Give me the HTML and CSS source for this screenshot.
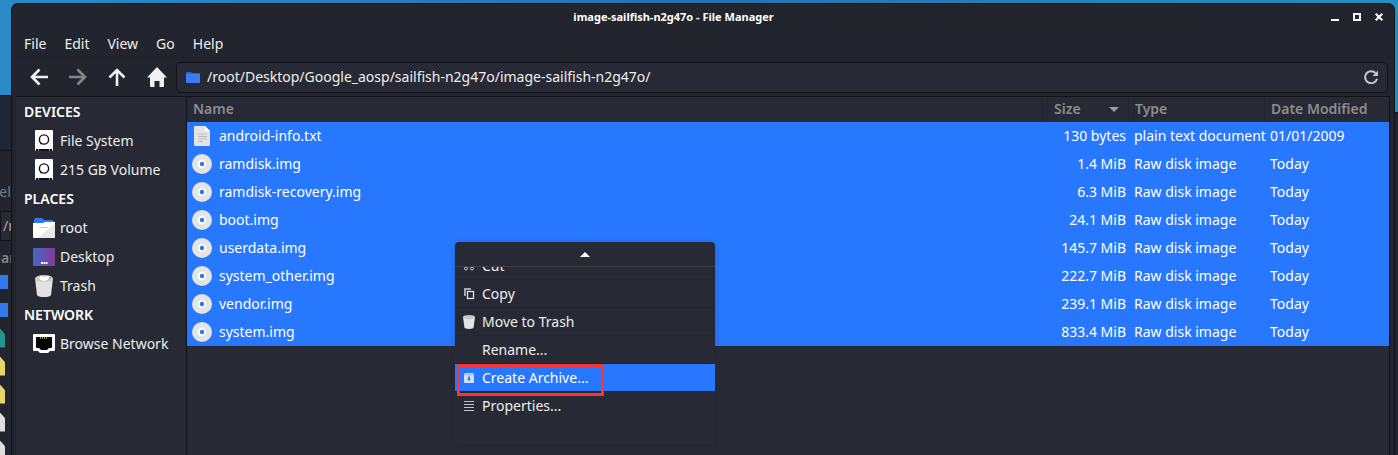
FILE: index.html
```
<!DOCTYPE html>
<html lang="en">
<head>
<meta charset="utf-8">
<title>image-sailfish-n2g47o - File Manager</title>
<link rel="stylesheet" href="styles.css">
</head>
<body>
<svg class="defs" width="0" height="0" aria-hidden="true">
  <symbol id="disc" viewBox="0 0 20 20"><circle cx="10" cy="10" r="10" fill="#e4e4e4"/><circle cx="10" cy="10" r="4.2" fill="#fff"/><circle cx="10" cy="10" r="2.2" fill="#2777ff"/></symbol>
  <symbol id="drive" viewBox="0 0 18 22"><rect width="18" height="21" rx="1" fill="#fff"/><path d="M1 19h16v2H1z" fill="#111"/><path d="M3 19h1v2H3zM14 19h1v2h-1z" fill="#888"/><circle cx="9" cy="9.500" r="4.600" fill="none" stroke="#111" stroke-width="1.400"/><path d="M5 14l2-1" stroke="#111"/></symbol>
  <symbol id="page" viewBox="0 0 16 20"><path d="M1 0h10l5 5v14q0 1-1 1H1q-1 0-1-1V1q0-1 1-1z" fill="#e4e4e4"/><path d="M11 0l5 5h-4q-1 0-1-1z" fill="#fff"/><path d="M4 8h9M4 10.500h9M4 13h9M4 15.500h5" stroke="#bbb"/></symbol>
  <symbol id="folder" viewBox="0 0 14 11"><path d="M0 1q0-1 1-1h4l1 1h7q1 0 1 1v8q0 1-1 1H1q-1 0-1-1z" fill="#2b65cf"/><path d="M0 2h14v8q0 1-1 1H1q-1 0-1-1z" fill="#3a7df5"/></symbol>
</svg>

<div class="back-window" aria-hidden="true">
  <div class="back-title"></div>
  <div class="back-menu">Help</div>
  <div class="back-path">/r</div>
  <div class="back-head">Name</div>
  <div class="back-row folder"></div>
  <div class="back-row folder"></div>
  <div class="back-row teal"></div>
  <div class="back-row yellow"></div>
  <div class="back-row yellow"></div>
  <div class="back-row gray"></div>
  <div class="back-row gray"></div>
</div>
<div class="side-window" aria-hidden="true"></div>

<main class="window">
  <header class="titlebar">
    <h1>image-sailfish-n2g47o - File Manager</h1>
    <div class="controls">
      <button aria-label="Minimize"><svg width="8" height="8"><path d="M0 6h8v2H0z" fill="#fff"/></svg></button>
      <button aria-label="Maximize"><svg width="8" height="8"><path d="M1 1h6v6H1z" fill="none" stroke="#fff" stroke-width="2"/></svg></button>
      <button aria-label="Close"><svg width="8" height="8"><path d="M.7.7l6.600 6.600M7.300.7L.7 7.300" stroke="#fff" stroke-width="2"/></svg></button>
    </div>
  </header>
  <nav class="menubar">
    <button>File</button><button>Edit</button><button>View</button><button>Go</button><button>Help</button>
  </nav>
  <div class="toolbar">
    <button aria-label="Back"><svg width="18" height="18"><path d="M18 9H2M9.500 1.500L2 9l7.500 7.500" fill="none" stroke="#f0f0ee" stroke-width="2.600"/></svg></button>
    <button aria-label="Forward"><svg width="18" height="18"><path d="M0 9h16M8.500 1.500L16 9l-7.500 7.500" fill="none" stroke="#858688" stroke-width="2.600"/></svg></button>
    <button aria-label="Up"><svg width="18" height="18"><path d="M9 18V2M1.500 9.500L9 2l7.500 7.500" fill="none" stroke="#f0f0ee" stroke-width="2.600"/></svg></button>
    <button aria-label="Home"><svg width="20" height="20"><path d="M10 0l10 10.500h-3V19q0 1-1 1h-3.500v-6h-5v6H4q-1 0-1-1v-8.500H0z" fill="#f0f0ee"/></svg></button>
    <div class="location">
      <svg width="14" height="11"><use href="#folder"/></svg>
      <input aria-label="Location" value="/root/Desktop/Google_aosp/sailfish-n2g47o/image-sailfish-n2g47o/">
      <button aria-label="Reload"><svg width="14" height="14"><path d="M11.500 3A6 6 0 1 0 13 8.700" fill="none" stroke="#c9c9c9" stroke-width="2"/><path d="M14 .5V6H8.500z" fill="#c9c9c9"/></svg></button>
    </div>
  </div>
  <div class="content">
    <aside class="sidebar">
      <h2>DEVICES</h2>
      <a href="#"><svg width="18" height="22"><use href="#drive"/></svg>File System</a>
      <a href="#"><svg width="18" height="22"><use href="#drive"/></svg>215 GB Volume</a>
      <h2>PLACES</h2>
      <a href="#"><svg width="22" height="22"><path d="M1 5V3q0-2 2-2h6l2 2h8q2 0 2 2v3H1z" fill="#3478ee"/><path d="M0 6h10l2-1h10v14q0 2-1 2H1q-1 0-1-1z" fill="#fff"/><path d="M22 6v14q0 1-1 1H5z" fill="#e8e8e8"/><path d="M6 10.500h9" stroke="#ccc"/></svg>root</a>
      <a href="#"><svg width="22" height="18"><defs><linearGradient id="desk"><stop stop-color="#4765c8"/><stop offset="1" stop-color="#7f3f94"/></linearGradient></defs><rect width="22" height="18" rx="1" fill="url(#desk)"/><path d="M8 14h2v2H8zM10.500 14h1.500v2h-1.500zM12.500 14h2v2h-2z" fill="#fff"/></svg>Desktop</a>
      <a href="#"><svg width="18" height="22"><path d="M0 3h18l-2 17q-1 2-7 2t-7-2z" fill="#e2e2e2"/><ellipse cx="9" cy="3.500" rx="9" ry="3.500" fill="#c9c9c9"/><path d="M2 4l4-3 4 1 4-1 2 3-7 2z" fill="#fff"/><path d="M3 4h2M13 4h2" stroke="#a4b657"/><path d="M14 3h2" stroke="#278cc5"/></svg>Trash</a>
      <h2>NETWORK</h2>
      <a href="#"><svg width="22" height="20"><path d="M1 0h20q1 0 1 1v15q0 1-1 1h-4l-2 2H7l-2-2H1q-1 0-1-1V1q0-1 1-1z" fill="#fff"/><path d="M3 3h16v10q0 1-1 1h-2l-2 2H8l-2-2H4q-1 0-1-1z" fill="#050505"/><path d="M7.500 3v2M9.500 3v2M11.500 3v2M13.500 3v2" stroke="#a5884e"/></svg>Browse Network</a>
    </aside>
    <section class="files">
      <table>
        <thead><tr><th>Name</th><th class="size">Size<svg width="10" height="5"><path d="M0 0h10L5 5z" fill="#9a9b9e"/></svg></th><th class="type">Type</th><th class="date">Date Modified</th></tr></thead>
        <tbody>
          <tr><td><span class="name"><svg width="20" height="20"><use href="#page"/></svg>android-info.txt</span></td><td class="num">130 bytes</td><td>plain text document</td><td>01/01/2009</td></tr>
          <tr><td><span class="name"><svg width="20" height="20"><use href="#disc"/></svg>ramdisk.img</span></td><td class="num">1.4 MiB</td><td>Raw disk image</td><td>Today</td></tr>
          <tr><td><span class="name"><svg width="20" height="20"><use href="#disc"/></svg>ramdisk-recovery.img</span></td><td class="num">6.3 MiB</td><td>Raw disk image</td><td>Today</td></tr>
          <tr><td><span class="name"><svg width="20" height="20"><use href="#disc"/></svg>boot.img</span></td><td class="num">24.1 MiB</td><td>Raw disk image</td><td>Today</td></tr>
          <tr><td><span class="name"><svg width="20" height="20"><use href="#disc"/></svg>userdata.img</span></td><td class="num">145.7 MiB</td><td>Raw disk image</td><td>Today</td></tr>
          <tr><td><span class="name"><svg width="20" height="20"><use href="#disc"/></svg>system_other.img</span></td><td class="num">222.7 MiB</td><td>Raw disk image</td><td>Today</td></tr>
          <tr><td><span class="name"><svg width="20" height="20"><use href="#disc"/></svg>vendor.img</span></td><td class="num">239.1 MiB</td><td>Raw disk image</td><td>Today</td></tr>
          <tr><td><span class="name"><svg width="20" height="20"><use href="#disc"/></svg>system.img</span></td><td class="num">833.4 MiB</td><td>Raw disk image</td><td>Today</td></tr>
        </tbody>
      </table>
    </section>
  </div>
</main>

<div class="context-menu">
  <div class="scroll-up"><svg width="10" height="5"><path d="M5 0l5 5H0z" fill="#fff"/></svg></div>
  <div class="menu-view">
    <div class="menu-list">
      <button><svg width="12" height="12"><path d="M3.500 0l4 7M8.500 0l-4 7" stroke="#ccc" stroke-width="1.300"/><circle cx="3" cy="8.500" r="1.500" fill="none" stroke="#ccc"/><circle cx="9" cy="8.500" r="1.500" fill="none" stroke="#ccc"/></svg>Cut</button>
      <button><svg width="12" height="12"><path d="M2 8V1h6" fill="none" stroke="#a8aab0" stroke-width="2"/><rect x="4.500" y="3.500" width="6" height="7" fill="none" stroke="#e0e0e0" stroke-width="1.300"/></svg>Copy</button>
      <button><svg width="12" height="14"><path d="M0 2h12l-1.500 11q-4.500 2-9 0z" fill="#e4e4e4"/><ellipse cx="6" cy="2" rx="6" ry="2" fill="#c8c8c8"/></svg>Move to Trash</button>
      <button><span class="no-icon"></span>Rename...</button>
      <button class="active"><svg width="12" height="12"><path d="M2 1h8l1 2v7q0 1-1 1H2q-1 0-1-1V3z" fill="#d4e1fa"/><path d="M1.500 2.500h9" stroke="#a9c5fa" stroke-width="2"/><path d="M5 4.500h2V7h1L6 9 4 7h1z" fill="#2777ff"/></svg>Create Archive...<span class="highlight"></span></button>
      <button><svg width="12" height="12"><path d="M1 1.500h10M1 4.500h10M1 7.500h10M1 10.500h10" stroke="#c4c5c9"/></svg>Properties...</button>
    </div>
  </div>
</div>
</body>
</html>
```
FILE: styles.css
```
* { box-sizing: border-box; }
body {
  margin: 0;
  height: 100vh;
  overflow: hidden;
  position: relative;
  background: linear-gradient(90deg, #2a8bc8, #2473b4 50%, #258fc0);
  color: #eeeeec;
  font: 14px/20px "Noto Sans", sans-serif;
}
button, input { font: inherit; color: inherit; background: none; border: 0; padding: 0; margin: 0; }
button { display: flex; align-items: center; }
svg { display: block; flex: none; }
h1, h2 { margin: 0; }
a { color: inherit; text-decoration: none; }
.defs { position: absolute; }

.back-window { position: absolute; inset: 95px auto 0 0; width: 60px; background: #22252d; border-top: 1px solid #101217; overflow: hidden; }
.back-title { height: 55px; border-bottom: 1px solid #101217; background: #202733; }
.back-menu { height: 60px; padding-top: 31px; margin-left: -11px; color: #777980; }
.back-path { height: 30px; padding: 4px 2px; border: 1px solid #101217; background: #272a34; color: #aaa; }
.back-head { height: 27px; margin-left: -10px; padding-top: 7px; color: #85868a; font-weight: 600; }
.back-row { height: 28px; display: flex; align-items: center; }
.back-row::before { content: ""; width: 5px; height: 19px; background: #dedede; clip-path: polygon(0 0, 100% 30%, 100% 100%, 0 100%); }
.back-row.folder::before { width: 8px; height: 14px; background: #3478ee; clip-path: none; }
.back-row.teal::before { background: #249690; }
.back-row.yellow::before { background: #ecd568; }
.side-window { position: absolute; inset: 112px 0 0 auto; width: 20px; background: #22252d; border-top: 1px solid #101217; }

.window {
  position: absolute;
  inset: 3px 3px 0 11px;
  display: flex;
  flex-direction: column;
  padding: 0 4px;
  border: 1px solid #101217;
  border-bottom: 0;
  border-radius: 7px 7px 0 0;
  background: #22252d;
}
.titlebar { height: 26px; display: flex; align-items: center; }
.titlebar h1 { flex: 1; text-align: center; font-size: 11px; line-height: 16px; font-weight: 700; color: #fff; }
.controls { display: flex; gap: 14px; padding-right: 7px; }
.menubar { height: 28px; display: flex; gap: 18px; padding-left: 8px; border-bottom: 1px solid #1f2128; }
.toolbar { height: 38px; display: flex; align-items: center; padding: 0 2px 0 14px; gap: 21px; }
.location { flex: 1; height: 31px; display: flex; align-items: center; gap: 7px; padding: 0 9px; border: 1px solid #101217; border-radius: 5px; background: #272a34; margin-left: -12px; }
.location input { flex: 1; min-width: 0; outline: 0; }
.content { flex: 1; display: flex; min-height: 0; border: 1px solid #101217; border-width: 1px 1px 0 0; background: #272a34; }
.sidebar { width: 171px; flex: none; border-right: 1px solid #101217; }
.sidebar h2 { height: 29px; padding-left: 8px; font-size: 14px; line-height: 29px; font-weight: 600; color: #fff; }
.sidebar a { height: 29px; display: grid; grid-template-columns: 22px 1fr; column-gap: 5px; align-items: center; justify-items: start; padding-left: 17px; }
.sidebar a svg { justify-self: center; }
.files { flex: 1; min-width: 0; }
table { width: 100%; table-layout: fixed; border-collapse: separate; border-spacing: 0; }
th { height: 25px; padding: 0 6px 2px; border-right: 1px solid #22252d; text-align: left; font-weight: 600; color: #8b8c90; }
th:last-child { border-right: 0; }
.size { width: 81px; }
.size svg { float: right; margin: 8px 3px 0 0; }
.type { width: 136px; }
.date { width: 124px; }
td { height: 28px; padding: 0 3px 0 5px; background: #2777ff; color: #fff; white-space: nowrap; }
.num { text-align: right; }
.name { display: flex; align-items: center; gap: 7px; }

.context-menu { position: absolute; left: 455px; top: 242px; width: 260px; border-radius: 4px; background: #272a34; box-shadow: 0 1px 4px #1b1e2644; overflow: hidden; }
.scroll-up { height: 25px; display: flex; align-items: center; justify-content: center; border-bottom: 1px solid #3d4049; }
.menu-view { overflow: hidden; padding-bottom: 24px; }
.menu-list { margin-top: -15px; }
.menu-list button { position: relative; width: 100%; height: 28px; gap: 7px; padding-left: 8px; border-bottom: 1px solid #22252d; }
.menu-list button:last-child { border-bottom: 0; }
.no-icon { width: 12px; }
.menu-list .active { background: #2777ff; color: #fff; }
.highlight { position: absolute; left: 2px; top: 0; width: 147px; height: 32px; border: 3px solid #fb3434; z-index: 1; }
```
